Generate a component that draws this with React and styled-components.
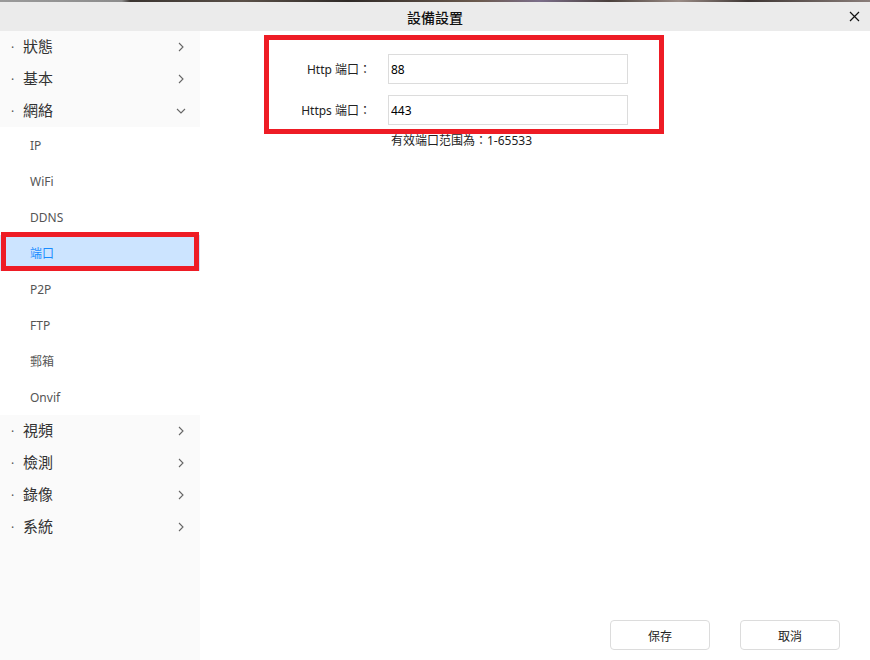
import React from "react";
import styled, { createGlobalStyle } from "styled-components";

const Global = createGlobalStyle`
  html, body { margin: 0; padding: 0; background: #fff; }
  body { font-family: "Noto Sans", "Noto Sans CJK TC", sans-serif; }
  *, *::before, *::after { box-sizing: border-box; }
`;

const Page = styled.div`
  width: 870px;
  height: 660px;
  display: flex;
  flex-direction: column;
  overflow: hidden;
`;

const Strip = styled.div`
  height: 2px;
  background: linear-gradient(90deg, #9a9a9a 0%, #8c8c8c 14%, #3a3430 15%, #5a5048 28%, #2f2a27 40%, #6b5a4e 55%, #7b6e8a 62%, #4a403c 70%, #9a8c86 78%, #3e3634 86%, #8a7e7a 100%);
`;

const Header = styled.div`
  height: 29px;
  background: #ebebeb;
  display: flex;
  align-items: center;
  justify-content: center;
  position: relative;
  font-family: "Noto Sans CJK TC", sans-serif;
  font-size: 14px;
  font-weight: 500;
  color: #111;
`;

const Close = styled.button`
  position: absolute;
  right: 9px;
  top: 7px;
  width: 14px;
  height: 14px;
  border: none;
  background: none;
  padding: 0;
  display: flex;
  align-items: center;
  justify-content: center;
`;

const Body = styled.div`
  flex: 1;
  display: flex;
`;

const Sidebar = styled.div`
  width: 200px;
  background: #fafafa;
  display: flex;
  flex-direction: column;
`;

const TopItem = styled.div`
  height: 32px;
  display: flex;
  align-items: center;
  padding: 0 14px 3px 11px;
  font-family: "Noto Sans CJK TC", sans-serif;
  font-size: 15px;
  color: #333;
`;

const Dot = styled.span`
  font-family: "Noto Sans", sans-serif;
  font-size: 12px;
  color: #555;
  width: 12px;
  padding-top: 4px;
`;

const Label = styled.span`
  flex: 1;
`;

const ChevronBox = styled.span`
  display: flex;
  margin-top: 3px;
`;

const SubList = styled.div`
  background: #fff;
  display: flex;
  flex-direction: column;
`;

const SubItem = styled.div`
  height: 36px;
  display: flex;
  align-items: center;
  padding-left: 30px;
  font-family: "Noto Sans", "Noto Sans CJK TC", sans-serif;
  font-size: 12px;
  color: ${(p) => (p.$active ? "#1a8cff" : "#555")};
  background: ${(p) => (p.$active ? "#cce4ff" : "transparent")};
  position: relative;
  ${(p) =>
    p.$active &&
    `&::after {
      content: "";
      position: absolute;
      left: 1px;
      right: 1px;
      top: -3px;
      bottom: 0px;
      border: 5px solid #ee1c25;
    }`}
`;

const Main = styled.div`
  flex: 1;
  display: flex;
  flex-direction: column;
  padding: 23px 30px 10px 64px;
`;

const FormBox = styled.div`
  width: 400px;
  position: relative;
  display: flex;
  flex-direction: column;
  gap: 11px;
  &::after {
    content: "";
    position: absolute;
    left: 0;
    top: -19px;
    width: 400px;
    height: 99px;
    border: 5px solid #ee1c25;
  }
`;

const Row = styled.div`
  display: flex;
  align-items: center;
  height: 30px;
`;

const FieldLabel = styled.label`
  width: 108px;
  text-align: right;
  padding-right: 1px;
  font-family: "Noto Sans", "Noto Sans CJK TC", sans-serif;
  font-size: 12px;
  color: #222;
  white-space: nowrap;
`;

const Input = styled.input`
  width: 240px;
  height: 30px;
  border: 1px solid #dcdcdc;
  padding: 0 0 0 2px;
  font-family: "Noto Sans", sans-serif;
  font-size: 12px;
  color: #000;
  outline: none;
  margin-left: 16px;
`;

const Hint = styled.div`
  margin-left: 127px;
  margin-top: -5px;
  font-family: "Noto Sans", "Noto Sans CJK TC", sans-serif;
  font-size: 12px;
  color: #222;
`;

const Spacer = styled.div`
  flex: 1;
`;

const Footer = styled.div`
  display: flex;
  justify-content: flex-end;
  gap: 30px;
`;

const Btn = styled.button`
  width: 100px;
  height: 30px;
  border: 1px solid #dcdcdc;
  border-radius: 4px;
  background: #fff;
  font-family: "Noto Sans CJK TC", sans-serif;
  font-size: 12px;
  color: #222;
`;

const Chevron = ({ down }) => (
  <ChevronBox>
    <svg width="10" height="10" viewBox="0 0 10 10">
      <path
        d={down ? "M1 3 L5 7 L9 3" : "M3 1 L7 5 L3 9"}
        fill="none"
        stroke="#666"
        strokeWidth="1.1"
      />
    </svg>
  </ChevronBox>
);

const top1 = ["狀態", "基本"];
const subs = ["IP", "WiFi", "DDNS", "端口", "P2P", "FTP", "郵箱", "Onvif"];
const top2 = ["視頻", "檢測", "錄像", "系統"];

export default function App() {
  return (
    <Page>
      <Global />
      <Strip />
      <Header>
        設備設置
        <Close>
          <svg width="11" height="11" viewBox="0 0 11 11">
            <path d="M1 1 L10 10 M10 1 L1 10" stroke="#111" strokeWidth="1.2" />
          </svg>
        </Close>
      </Header>
      <Body>
        <Sidebar>
          {top1.map((t) => (
            <TopItem key={t}>
              <Dot>·</Dot>
              <Label>{t}</Label>
              <Chevron />
            </TopItem>
          ))}
          <TopItem>
            <Dot>·</Dot>
            <Label>網絡</Label>
            <Chevron down />
          </TopItem>
          <SubList>
            {subs.map((s) => (
              <SubItem key={s} $active={s === "端口"}>
                {s}
              </SubItem>
            ))}
          </SubList>
          {top2.map((t) => (
            <TopItem key={t}>
              <Dot>·</Dot>
              <Label>{t}</Label>
              <Chevron />
            </TopItem>
          ))}
        </Sidebar>
        <Main>
          <FormBox>
            <Row>
              <FieldLabel>Http 端口：</FieldLabel>
              <Input defaultValue="88" />
            </Row>
            <Row>
              <FieldLabel>Https 端口：</FieldLabel>
              <Input defaultValue="443" />
            </Row>
            <Hint>有效端口范围為：1-65533</Hint>
          </FormBox>
          <Spacer />
          <Footer>
            <Btn>保存</Btn>
            <Btn>取消</Btn>
          </Footer>
        </Main>
      </Body>
    </Page>
  );
}
